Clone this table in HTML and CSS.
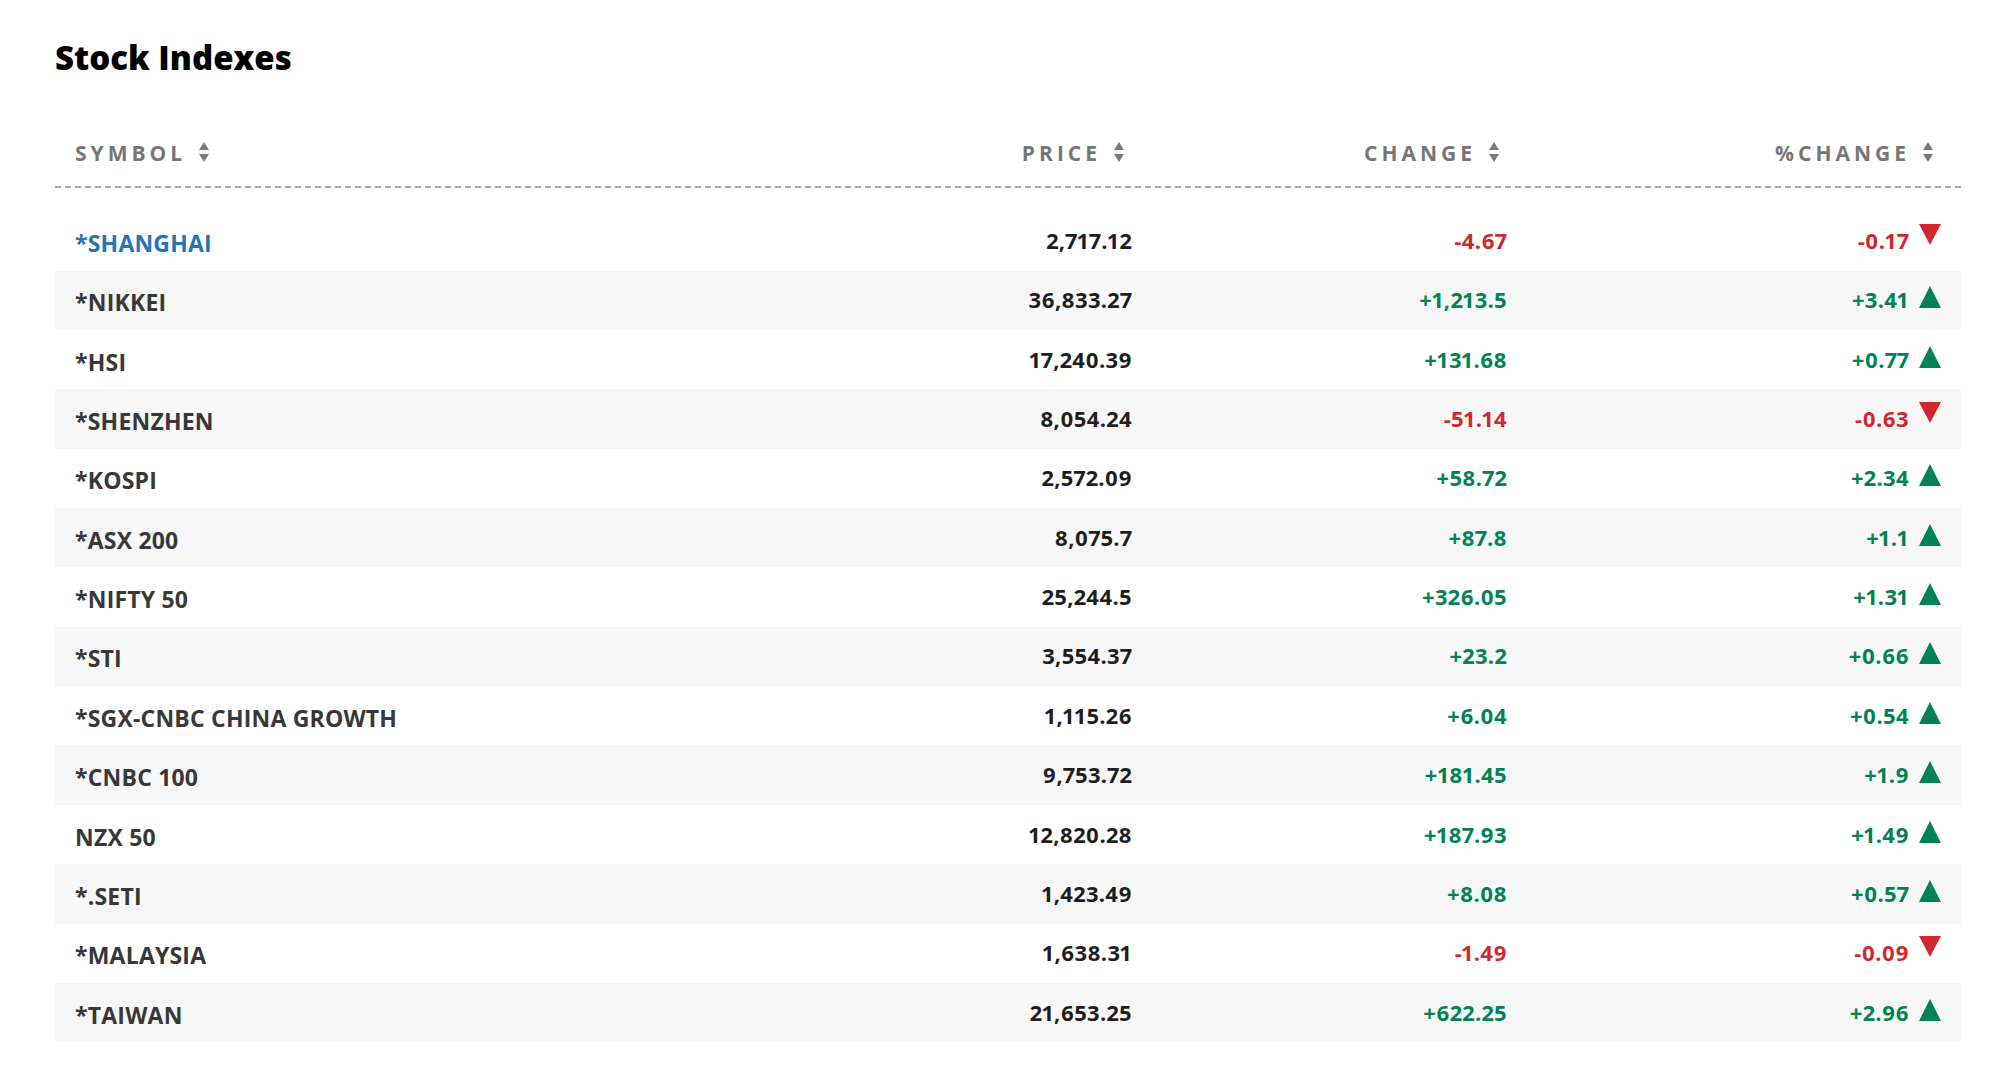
FILE: index.html
```html
<!DOCTYPE html>
<html>
<head>
<meta charset="utf-8">
<link rel="stylesheet" href="styles.css">
</head>
<body>
<div class="page">
  <h2 class="title">Stock Indexes</h2>
  <div class="table">
    <div class="head">
      <div class="hcell left">SYMBOL<span class="sort"><i class="up"></i><i class="dn"></i></span></div>
      <div class="hcell">PRICE<span class="sort"><i class="up"></i><i class="dn"></i></span></div>
      <div class="hcell">CHANGE<span class="sort"><i class="up"></i><i class="dn"></i></span></div>
      <div class="hcell">%CHANGE<span class="sort"><i class="up"></i><i class="dn"></i></span></div>
    </div>
    <div class="rule"></div>
    <div class="body">
      <div class="row"><div class="sym link">*SHANGHAI</div><div class="num">2,717.12</div><div class="num neg">-4.67</div><div class="num neg pct">-0.17<span class="tri down"></span></div></div>
      <div class="row"><div class="sym">*NIKKEI</div><div class="num">36,833.27</div><div class="num pos">+1,213.5</div><div class="num pos pct">+3.41<span class="tri up"></span></div></div>
      <div class="row"><div class="sym">*HSI</div><div class="num">17,240.39</div><div class="num pos">+131.68</div><div class="num pos pct">+0.77<span class="tri up"></span></div></div>
      <div class="row"><div class="sym">*SHENZHEN</div><div class="num">8,054.24</div><div class="num neg">-51.14</div><div class="num neg pct">-0.63<span class="tri down"></span></div></div>
      <div class="row"><div class="sym">*KOSPI</div><div class="num">2,572.09</div><div class="num pos">+58.72</div><div class="num pos pct">+2.34<span class="tri up"></span></div></div>
      <div class="row"><div class="sym">*ASX 200</div><div class="num">8,075.7</div><div class="num pos">+87.8</div><div class="num pos pct">+1.1<span class="tri up"></span></div></div>
      <div class="row"><div class="sym">*NIFTY 50</div><div class="num">25,244.5</div><div class="num pos">+326.05</div><div class="num pos pct">+1.31<span class="tri up"></span></div></div>
      <div class="row"><div class="sym">*STI</div><div class="num">3,554.37</div><div class="num pos">+23.2</div><div class="num pos pct">+0.66<span class="tri up"></span></div></div>
      <div class="row"><div class="sym">*SGX-CNBC CHINA GROWTH</div><div class="num">1,115.26</div><div class="num pos">+6.04</div><div class="num pos pct">+0.54<span class="tri up"></span></div></div>
      <div class="row"><div class="sym">*CNBC 100</div><div class="num">9,753.72</div><div class="num pos">+181.45</div><div class="num pos pct">+1.9<span class="tri up"></span></div></div>
      <div class="row"><div class="sym">NZX 50</div><div class="num">12,820.28</div><div class="num pos">+187.93</div><div class="num pos pct">+1.49<span class="tri up"></span></div></div>
      <div class="row"><div class="sym">*.SETI</div><div class="num">1,423.49</div><div class="num pos">+8.08</div><div class="num pos pct">+0.57<span class="tri up"></span></div></div>
      <div class="row"><div class="sym">*MALAYSIA</div><div class="num">1,638.31</div><div class="num neg">-1.49</div><div class="num neg pct">-0.09<span class="tri down"></span></div></div>
      <div class="row"><div class="sym">*TAIWAN</div><div class="num">21,653.25</div><div class="num pos">+622.25</div><div class="num pos pct">+2.96<span class="tri up"></span></div></div>
    </div>
  </div>
</div>
</body>
</html>
```
FILE: styles.css
```css
* { box-sizing: border-box; }
html, body { margin: 0; padding: 0; background: #fff; }
body { font-family: "Open Sans", "Liberation Sans", sans-serif; }
.page { padding: 0 42px 0 55px; }
.title {
  margin: 38px 0 0;
  font-size: 33px;
  line-height: 40px;
  font-weight: 800;
  color: #000;
}
.table { margin-top: 63px; }
.head, .row {
  display: grid;
  grid-template-columns: 1fr 300px 375px 434px;
}
.hcell {
  font-size: 21px;
  line-height: 25px;
  font-weight: 700;
  letter-spacing: 4px;
  color: #767676;
  padding: 0 28px 20px 20px;
  display: flex;
  justify-content: flex-end;
  align-items: center;
}
.hcell.left { justify-content: flex-start; }
.sort {
  display: inline-flex;
  flex-direction: column;
  gap: 4px;
  margin-left: 13px;
  margin-top: -4px;
}
.sort i {
  display: block;
  width: 0; height: 0;
  border-left: 5px solid transparent;
  border-right: 5px solid transparent;
}
.sort i.up { border-bottom: 8px solid #7a7a7a; }
.sort i.dn { border-top: 8px solid #7a7a7a; }
.rule {
  height: 2px;
  background: repeating-linear-gradient(to right, #a8a8a8 0 6px, transparent 6px 10px);
}
.body { margin-top: 23.4px; }
.row { height: 59.35px; align-items: center; }
.row:nth-child(even) { background: #f7f7f7; }
.sym, .num {
  font-weight: 700;
  line-height: 28px;
  padding: 0 20px;
}
.sym { font-size: 23px; color: #383838; padding-top: 4px; letter-spacing: 0.2px; }
.sym.link { color: #2475b6; }
.num { font-size: 22px; text-align: right; color: #1e1e1e; padding-top: 0; padding-bottom: 2px; font-variant-numeric: proportional-nums; letter-spacing: 0.3px; }
.num.pos { color: #008254; }
.num.neg { color: #d0282e; }
.pct { display: flex; justify-content: flex-end; align-items: flex-end; }
.tri {
  display: block;
  width: 0; height: 0;
  margin-left: 10px;
  border-left: 11.5px solid transparent;
  border-right: 11.5px solid transparent;
}
.tri.up { border-bottom: 22px solid #008254; margin-bottom: 5px; }
.tri.down { border-top: 21px solid #d0282e; align-self: flex-start; margin-top: -2px; }
```
